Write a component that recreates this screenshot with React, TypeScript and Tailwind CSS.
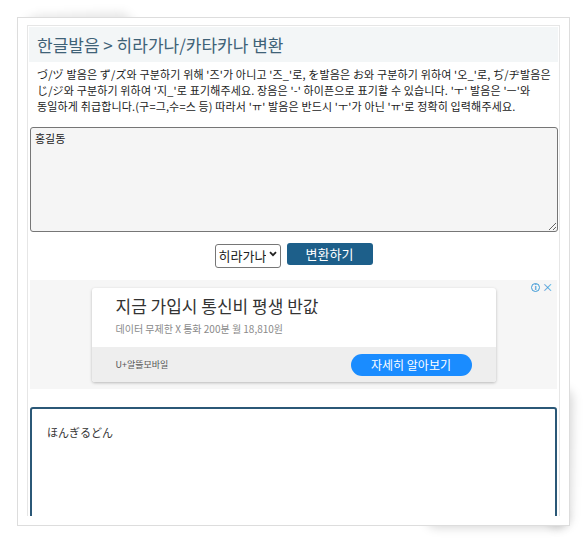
import React from 'react';

const FONT = { fontFamily: '"Malgun Gothic", "Noto Sans CJK KR", "Noto Sans", sans-serif' };

function AdBlock() {
  return (
    <div className="relative mx-[1px] mt-[14px] h-[109px] bg-[#f6f6f6] pt-[8px]">
      <div className="absolute right-[4px] top-[2px] flex items-center gap-[2px] text-[10px] leading-none text-[#3d9ad6]">
        <span className="flex h-[9px] w-[9px] items-center justify-center rounded-full border border-[#3d9ad6] text-[7px] font-bold">i</span>
        <span className="text-[11px]">×</span>
      </div>
      <div className="mx-auto w-[404px] overflow-hidden rounded-[3px] bg-white shadow-[0_1px_3px_rgba(0,0,0,0.25)]">
        <div className="h-[59px] px-[24px] pt-[6px]">
          <div className="text-[17px] leading-[24px] text-[#333]">지금 가입시 통신비 평생 반값</div>
          <div className="mt-[4px] text-[10px] leading-[14px] text-[#8a8a8a]">데이터 무제한 X 통화 200분 월 18,810원</div>
        </div>
        <div className="flex h-[35px] items-center justify-between bg-[#eeeeee] px-[24px]">
          <span className="text-[9px] text-[#555]">U+알뜰모바일</span>
          <span className="flex h-[22px] w-[121px] items-center justify-center rounded-full bg-[#1a8cff] text-[12px] text-white">자세히 알아보기</span>
        </div>
      </div>
    </div>
  );
}

export default function App() {
  return (
    <div className="relative h-[544px] w-[588px] overflow-hidden bg-white" style={FONT}>
      {/* curled shadow pieces */}
      <div className="absolute left-[24px] top-[14px] h-[30px] w-[110px] -rotate-2 rounded-full bg-black/10 blur-[5px]" />
      <div className="absolute bottom-[16px] right-[16px] h-[140px] w-[24px] rotate-1 rounded-full bg-black/15 blur-[5px]" />
      <div className="absolute bottom-[16px] right-[22px] h-[20px] w-[140px] rounded-full bg-black/15 blur-[5px]" />

      <div className="relative ml-[17px] mt-[17px] h-[509px] w-[553px] border border-[#dddddd] bg-white px-[9px] pb-[9px] pt-[7px]">
        <div className="h-[491px] overflow-hidden border-x border-t border-[#e6e6e6] px-[1px] pt-[1px]">
          <div className="flex h-[35px] items-center bg-[#f3f6f7] px-[8px] text-[17px] text-[#3f6277]">
            한글발음 &gt; 히라가나/카타카나 변환
          </div>

          <p className="mt-[4px] whitespace-nowrap px-[8px] text-[11px] leading-[16px] tracking-[0.15px] text-[#222]">
            づ/ヅ 발음은 ず/ズ와 구분하기 위해 '즈'가 아니고 '즈_'로, を발음은 お와 구분하기 위하여 '오_'로, ぢ/ヂ발음은
            <br />
            じ/ジ와 구분하기 위하여 '지_'로 표기해주세요. 장음은 '-' 하이픈으로 표기할 수 있습니다. 'ㅜ' 발음은 'ㅡ'와
            <br />
            동일하게 취급합니다.(구=그,수=스 등) 따라서 'ㅠ' 발음은 반드시 'ㅜ'가 아닌 'ㅠ'로 정확히 입력해주세요.
          </p>

          <textarea
            defaultValue="홍길동"
            className="ml-[1px] mt-[13px] block h-[105px] w-[528px] rounded-[3px] border border-[#767676] bg-[#f5f5f5] px-[4px] py-[3px] text-[11px] leading-[14px] text-[#222] outline-none"
            style={FONT}
          />

          <div className="mt-[10px] flex items-center justify-center gap-[6px]">
            <div className="relative h-[24px] w-[66px]">
              <select
                className="h-full w-full appearance-none rounded-[3px] border border-[#767676] bg-white pl-[3px] pr-[14px] text-[13px] text-[#222] outline-none"
                style={FONT}
                defaultValue="h"
              >
                <option value="h">히라가나</option>
                <option value="k">카타카나</option>
              </select>
              <svg className="pointer-events-none absolute right-[4px] top-[9px]" width="8" height="6" viewBox="0 0 8 6">
                <path d="M1 1.2 L4 4.2 L7 1.2" fill="none" stroke="#222" strokeWidth="1.8" />
              </svg>
            </div>
            <button
              className="h-[22px] w-[86px] rounded-[3px] bg-[#1d5f8a] text-[13px] text-white"
              style={FONT}
            >
              변환하기
            </button>
          </div>

          <AdBlock />

          <div className="mx-[1px] mt-[18px] h-[120px] rounded-t-[3px] border-2 border-[#2b5877] bg-white px-[15px] pt-[15px] text-[11px] text-[#333]">
            ほんぎるどん
          </div>
        </div>
      </div>
    </div>
  );
}
